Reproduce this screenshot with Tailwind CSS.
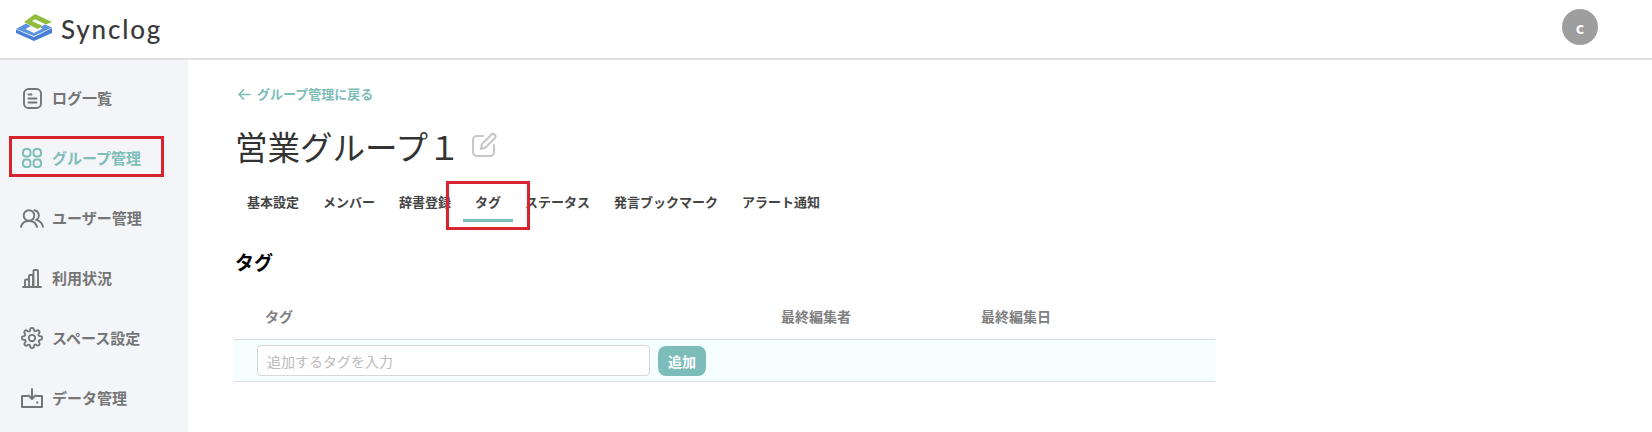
<!DOCTYPE html>
<html lang="ja">
<head>
  <meta charset="UTF-8">
  <meta name="viewport" content="width=device-width, initial-scale=1.0">
  <title>Synclog</title>
  <script src="https://cdn.jsdelivr.net/npm/@tailwindcss/browser@4"></script>
</head>
<body class="bg-white h-[432px] overflow-hidden font-['Noto_Sans_CJK_JP','Noto_Sans',sans-serif]">
  <!-- Header -->
  <header class="h-[60px] border-b-2 border-[#e0e0e0] flex items-center justify-between pl-4 pr-[54px]">
    <div class="flex items-center gap-[9px] -mt-[4px]">
      <svg width="36" height="27" viewBox="0 0 36 27">
        <path d="M0 15.500 L0 19 L18 27 L36 19 L36 14 L18 23 Z" fill="#4a7fd6"/>
        <path d="M0 15 L10 9.500 L15 12 L9.500 15 L18 19 L26.500 14.500 L24 13.300 L29 10.500 L36 13.500 L18 22 Z" fill="#5b93e0"/>
        <path d="M8 8 L19 0 L36 8 L30 10.500 L19 5.200 L16 7 L26.500 12 L21.500 15 Z" fill="#8fbc3a"/>
      </svg>
      <span class="font-['Lato',sans-serif] text-[26px] font-medium leading-none tracking-[1.8px] text-[#3a3a3a] mt-[4px]">Synclog</span>
    </div>
    <div class="w-9 h-9 rounded-full bg-[#9e9e9e] flex items-center justify-center text-white text-base font-bold -mt-[4px]">c</div>
  </header>

  <div class="flex h-[372px]">
    <!-- Sidebar -->
    <nav class="w-[188px] shrink-0 bg-[#f3f5f9] pt-2 text-[15px] font-bold text-[#757575]">
      <a class="h-[60px] flex items-center gap-2 pl-5">
        <span class="w-6 flex justify-center">
          <svg class="w-[19px] h-[21px]" viewBox="0 0 19 21" fill="none" stroke="currentColor" stroke-width="1.900" stroke-linecap="round"><rect x="1" y="1" width="17" height="19" rx="4.500"/><path d="M5.500 6.500h3M5.500 10.500h8M5.500 14.500h8"/></svg>
        </span>
        <span>ログ一覧</span>
      </a>
      <a class="relative h-[60px] flex items-center gap-2 pl-5 text-[#7fbdb8]">
        <span class="w-6 flex justify-center">
          <svg class="w-5 h-5" viewBox="0 0 20 20" fill="none" stroke="currentColor" stroke-width="2"><rect x="1" y="1" width="7.500" height="7.500" rx="3"/><rect x="11.500" y="1" width="7.500" height="7.500" rx="3"/><rect x="1" y="11.500" width="7.500" height="7.500" rx="3"/><rect x="11.500" y="11.500" width="7.500" height="7.500" rx="3"/></svg>
        </span>
        <span>グループ管理</span>
        <div class="absolute left-[9px] top-[8px] w-[155px] h-[41px] border-[3px] border-[#d9232e]"></div>
      </a>
      <a class="h-[60px] flex items-center gap-2 pl-5">
        <span class="w-6 flex justify-center">
          <svg class="w-6 h-[19px]" viewBox="0 0 24 19" fill="none" stroke="currentColor" stroke-width="1.900" stroke-linecap="round"><circle cx="9" cy="6.500" r="5.300"/><path d="M1 18c.8-3.700 3.800-6 8-6s7.200 2.300 8 6"/><path d="M14.500 1.300a5.300 5.300 0 0 1 2 9.600c3.500 1 5.700 3.500 6.500 7"/></svg>
        </span>
        <span>ユーザー管理</span>
      </a>
      <a class="h-[60px] flex items-center gap-2 pl-5">
        <span class="w-6 flex justify-center">
          <svg class="w-5 h-[19px]" viewBox="0 0 20 19" fill="none" stroke="currentColor" stroke-width="1.900" stroke-linejoin="round" stroke-linecap="round"><path d="M1 18h18M3 18v-6.500a1 1 0 0 1 1-1h2a1 1 0 0 1 1 1V18M7 18V7a1 1 0 0 1 1-1h2a1 1 0 0 1 1 1v11M11.500 18V2a1 1 0 0 1 1-1h2.500a1 1 0 0 1 1 1v16"/></svg>
        </span>
        <span>利用状況</span>
      </a>
      <a class="h-[60px] flex items-center gap-2 pl-5">
        <span class="w-6 flex justify-center">
          <svg class="w-[22px] h-[22px]" viewBox="0 0 24 24" fill="none" stroke="currentColor" stroke-width="2" stroke-linecap="round" stroke-linejoin="round"><circle cx="12" cy="12" r="3.500"/><path d="M19.400 15a1.650 1.650 0 0 0 .33 1.820l.06.06a2 2 0 1 1-2.830 2.830l-.06-.06a1.650 1.650 0 0 0-2.820 1.170V21a2 2 0 1 1-4 0v-.09a1.650 1.650 0 0 0-2.820-1.120l-.06.06a2 2 0 1 1-2.830-2.830l.06-.06A1.650 1.650 0 0 0 3.090 14H3a2 2 0 1 1 0-4h.09a1.650 1.650 0 0 0 1.120-2.820l-.06-.06a2 2 0 1 1 2.830-2.830l.06.06A1.650 1.650 0 0 0 10 3.090V3a2 2 0 1 1 4 0v.09a1.650 1.650 0 0 0 2.820 1.120l.06-.06a2 2 0 1 1 2.830 2.830l-.06.06A1.650 1.650 0 0 0 20.910 10H21a2 2 0 1 1 0 4h-.09a1.650 1.650 0 0 0-1.510 1z"/></svg>
        </span>
        <span>スペース設定</span>
      </a>
      <a class="h-[60px] flex items-center gap-2 pl-5">
        <span class="w-6 flex justify-center">
          <svg class="w-[22px] h-5" viewBox="0 0 22 20" fill="none" stroke="currentColor" stroke-width="2" stroke-linecap="round" stroke-linejoin="round"><path d="M11 1v10M7.500 7.500 11 11l3.500-3.500M6 8H1v11h20V8h-5"/><path d="M16 14.500h.5"/></svg>
        </span>
        <span>データ管理</span>
      </a>
    </nav>

    <!-- Main -->
    <main class="flex-1 pl-[46px]">
      <a class="flex items-center gap-[6px] h-[18px] mt-[25px] pl-[4px] text-[13px] font-bold text-[#7fbdb8]">
        <svg class="w-[13px] h-[13px]" viewBox="0 0 14 14" fill="none" stroke="currentColor" stroke-width="1.600" stroke-linecap="round" stroke-linejoin="round"><path d="M13 7H1.500M6 2 1 7l5 5"/></svg>
        <span>グループ管理に戻る</span>
      </a>
      <div class="flex items-center gap-[11px] mt-[19px] h-[48px] pl-[1px]">
        <h1 class="text-[32.500px] leading-none text-[#333]">営業グループ１</h1>
        <svg class="w-[25px] h-[25px] mt-[-3px]" viewBox="0 0 25 25" fill="none" stroke="#c8c8c8" stroke-width="2.200" stroke-linecap="round" stroke-linejoin="round"><path d="M11 4H5a4 4 0 0 0-4 4v12a4 4 0 0 0 4 4h13a4 4 0 0 0 4-4v-7"/><path d="M9 17l1-5L19.500 2.500a2.500 2.500 0 0 1 3.500 3.500L13.500 15.500z"/></svg>
      </div>
      <!-- Tabs -->
      <div class="relative flex mt-[11px] h-[45px] pl-[1px] text-[13px] font-bold text-[#444]">
        <a class="px-3 pt-[11px]">基本設定</a>
        <a class="px-3 pt-[11px]">メンバー</a>
        <a class="px-3 pt-[11px]">辞書登録</a>
        <a class="relative px-3 pt-[11px]">タグ<span class="absolute left-0 right-0 top-[38px] h-[3px] bg-[#7fbdb8]"></span></a>
        <a class="px-3 pt-[11px]">ステータス</a>
        <a class="px-3 pt-[11px]">発言ブックマーク</a>
        <a class="px-3 pt-[11px]">アラート通知</a>
        <div class="absolute left-[212px] top-0 w-[84px] h-[49px] border-[3px] border-[#d9232e]"></div>
      </div>
      <h2 class="mt-[22px] pl-[1px] text-[19px] font-bold text-black leading-[27px]">タグ</h2>
      <!-- Table -->
      <div class="w-[981px] mt-[31px]">
        <div class="flex h-[34px] text-sm font-bold text-[#808080] leading-5 border-b border-[#d5dfdf]">
          <div class="w-[547px] pl-[31px]">タグ</div>
          <div class="w-[200px]">最終編集者</div>
          <div>最終編集日</div>
        </div>
        <div class="flex items-center gap-2 h-[42px] pl-[23px] bg-[#f5fefe] border-b border-[#d9e2e2]">
          <input class="w-[393px] h-[31px] px-[9px] bg-white border border-[#d4d8d8] rounded-[4px] text-sm placeholder:text-[#bbbbbb]" placeholder="追加するタグを入力">
          <button class="w-[48px] h-[30px] rounded-lg bg-[#7dbdb9] text-white text-sm font-bold">追加</button>
        </div>
      </div>
    </main>
  </div>
</body>
</html>
